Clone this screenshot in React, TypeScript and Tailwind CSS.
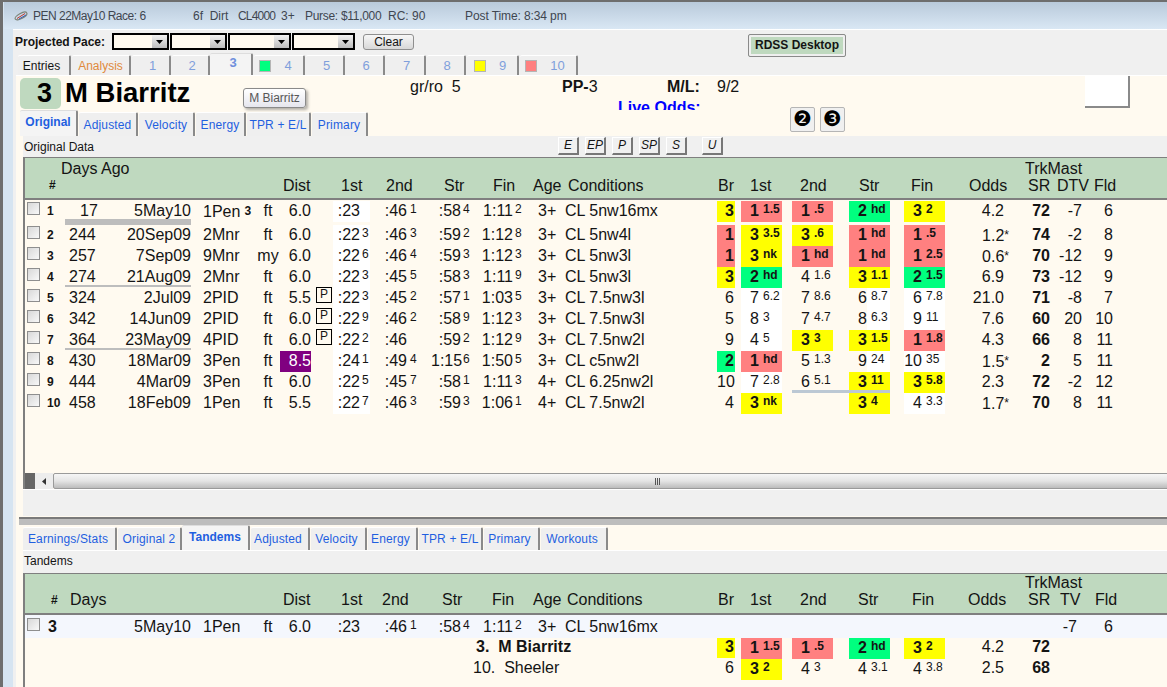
import React from 'react';

const GRID =
  'grid grid-cols-[19px_21px_35px_91px_65px_24px_31px_22px_37px_61px_46px_53px_30px_157px_18px_6px_41px_10px_41px_16px_41px_14px_41px_59px_46px_32px_31px]';

type Run = {
  n: number;
  days: string;
  date: string;
  trk: string;
  trkSup?: string;
  surf: string;
  dist: string;
  p?: boolean;
  t1: string;
  t2: string;
  t3: string;
  t4: string;
  age: string;
  cond: string;
  br: string;
  c1: string;
  c2: string;
  c3: string;
  c4: string;
  odds: string;
  sr: string;
  dtv: string;
  fld: string;
};

// cells are written "main|sup" and calls "pos|margin|colour"
const runs: Run[] = [
  { n: 1, days: '17', date: '5May10', trk: '1Pen', trkSup: '3', surf: 'ft', dist: '6.0', t1: ':23|', t2: ':46|1', t3: ':58|4', t4: '1:11|2', age: '3+', cond: 'CL 5nw16mx', br: '3|y', c1: '1|1.5|r', c2: '1|.5|r', c3: '2|hd|g', c4: '3|2|y', odds: '4.2', sr: '72', dtv: '-7', fld: '6' },
  { n: 2, days: '244', date: '20Sep09', trk: '2Mnr', surf: 'ft', dist: '6.0', t1: ':22|3', t2: ':46|3', t3: ':59|2', t4: '1:12|8', age: '3+', cond: 'CL 5nw4l', br: '1|r', c1: '3|3.5|y', c2: '3|.6|y', c3: '1|hd|r', c4: '1|.5|r', odds: '1.2*', sr: '74', dtv: '-2', fld: '8' },
  { n: 3, days: '257', date: '7Sep09', trk: '9Mnr', surf: 'my', dist: '6.0', t1: ':22|6', t2: ':46|4', t3: ':59|3', t4: '1:12|3', age: '3+', cond: 'CL 5nw3l', br: '1|r', c1: '3|nk|y', c2: '1|hd|r', c3: '1|hd|r', c4: '1|2.5|r', odds: '0.6*', sr: '70', dtv: '-12', fld: '9' },
  { n: 4, days: '274', date: '21Aug09', trk: '2Mnr', surf: 'ft', dist: '6.0', t1: ':22|3', t2: ':45|5', t3: ':58|3', t4: '1:11|9', age: '3+', cond: 'CL 5nw3l', br: '3|y', c1: '2|hd|g', c2: '4|1.6|', c3: '3|1.1|y', c4: '2|1.5|g', odds: '6.9', sr: '73', dtv: '-12', fld: '9' },
  { n: 5, days: '324', date: '2Jul09', trk: '2PID', surf: 'ft', dist: '5.5', p: true, t1: ':22|3', t2: ':45|2', t3: ':57|1', t4: '1:03|5', age: '3+', cond: 'CL 7.5nw3l', br: '6|', c1: '7|6.2|', c2: '7|8.6|', c3: '6|8.7|', c4: '6|7.8|', odds: '21.0', sr: '71', dtv: '-8', fld: '7' },
  { n: 6, days: '342', date: '14Jun09', trk: '2PID', surf: 'ft', dist: '6.0', p: true, t1: ':22|9', t2: ':46|2', t3: ':58|9', t4: '1:12|3', age: '3+', cond: 'CL 7.5nw3l', br: '5|', c1: '8|3|', c2: '7|4.7|', c3: '8|6.3|', c4: '9|11|', odds: '7.6', sr: '60', dtv: '20', fld: '10' },
  { n: 7, days: '364', date: '23May09', trk: '4PID', surf: 'ft', dist: '6.0', p: true, t1: ':22|2', t2: ':46|', t3: ':59|2', t4: '1:12|9', age: '3+', cond: 'CL 7.5nw2l', br: '9|', c1: '4|5|', c2: '3|3|y', c3: '3|1.5|y', c4: '1|1.8|r', odds: '4.3', sr: '66', dtv: '8', fld: '11' },
  { n: 8, days: '430', date: '18Mar09', trk: '3Pen', surf: 'ft', dist: '8.5', t1: ':24|1', t2: ':49|4', t3: '1:15|6', t4: '1:50|5', age: '3+', cond: 'CL c5nw2l', br: '2|g', c1: '1|hd|r', c2: '5|1.3|', c3: '9|24|', c4: '10|35|', odds: '1.5*', sr: '2', dtv: '5', fld: '11' },
  { n: 9, days: '444', date: '4Mar09', trk: '3Pen', surf: 'ft', dist: '6.0', t1: ':22|5', t2: ':45|7', t3: ':58|1', t4: '1:11|3', age: '4+', cond: 'CL 6.25nw2l', br: '10|', c1: '7|2.8|', c2: '6|5.1|', c3: '3|11|y', c4: '3|5.8|y', odds: '2.3', sr: '72', dtv: '-2', fld: '12' },
  { n: 10, days: '458', date: '18Feb09', trk: '1Pen', surf: 'ft', dist: '5.5', t1: ':22|7', t2: ':46|3', t3: ':59|3', t4: '1:06|1', age: '4+', cond: 'CL 7.5nw2l', br: '4|', c1: '3|nk|y', c2: '', c3: '3|4|y', c4: '4|3.3|', odds: '1.7*', sr: '70', dtv: '8', fld: '11' },
];

const fill: Record<string, string> = { y: 'bg-[#ffff00]', r: 'bg-[#ff8080]', g: 'bg-[#00ff7f]' };

function Checkbox() {
  return (
    <div className="ml-[2px] mt-[1px] w-[13px] h-[13px] border border-[#8e8e8e] bg-gradient-to-br from-[#d8d8d8] to-[#f8f8f8]" />
  );
}

function Time({ value, w, gap = 'ml-[2px]', className = '' }: { value: string; w: string; gap?: string; className?: string }) {
  const [main, sup] = value.split('|');
  return (
    <div className={`flex h-[21px] leading-[20px] ${className}`}>
      <span className={`${w} text-right whitespace-nowrap`}>{main}</span>
      <span className={`${gap} text-[12px] leading-[17px]`}>{sup}</span>
    </div>
  );
}

function Call({ value, whiteSup, whiteAll, line }: { value: string; whiteSup?: boolean; whiteAll?: boolean; line?: boolean }) {
  const [pos, margin, colour] = value.split('|');
  const border = line ? 'border-b-[3px] border-[#bcc8d4]' : '';
  if (colour) {
    return (
      <div className={`flex h-[21px] leading-[20px] font-bold ${fill[colour]} ${border}`}>
        <span className="w-[18px] text-right">{pos}</span>
        <span className="ml-[4px] text-[12px] leading-[17px]">{margin}</span>
      </div>
    );
  }
  return (
    <div className={`flex h-[21px] leading-[20px] ${whiteAll ? 'bg-white' : ''} ${border}`}>
      <span className="w-[18px] text-right">{pos}</span>
      <span className={`pl-[4px] flex-1 text-[12px] leading-[17px] ${whiteSup ? 'bg-white' : ''}`}>{margin}</span>
    </div>
  );
}

function Odds({ value }: { value: string }) {
  const star = value.endsWith('*');
  return (
    <div className="text-right">
      {value.replace('*', '')}
      {star && <span className="mr-[-5px] text-[12px] align-[2px]">*</span>}
    </div>
  );
}

function RunRow({ r }: { r: Run }) {
  const [brVal, brCol] = r.br.split('|');
  const ruled = r.n === 4 || r.n === 7;
  const under = r.n === 1 ? 'h-[24px] border-b-[6px] border-[#bdbdbd]' : ruled ? 'h-[20px] border-b-2 border-[#bdbdbd]' : '';
  return (
    <div className={`${GRID} ${r.n === 1 ? 'h-[24px]' : 'h-[21px]'} text-[16px] leading-[20px]`}>
      <Checkbox />
      <div className="pl-[3px] text-[12px] font-bold">{r.n}</div>
      <div className={`${r.n === 1 ? 'pl-[15px]' : 'pl-[4px]'} ${under}`}>{r.days}</div>
      <div className={`text-right ${under}`}>{r.date}</div>
      <div className="pl-[12px] whitespace-nowrap">
        {r.trk}
        {r.trkSup && <span className="ml-[4px] text-[12px] font-bold align-[2px]">{r.trkSup}</span>}
      </div>
      <div className="text-center">{r.surf}</div>
      <div className={`text-right h-[21px] ${r.dist === '8.5' ? 'bg-[#800080] text-white' : ''}`}>{r.dist}</div>
      <div>
        {r.p && (
          <div className="ml-[5px] -mt-[1px] w-[16px] h-[16px] border border-black text-[12px] leading-[13px] text-center">P</div>
        )}
      </div>
      <Time value={r.t1} w="w-[27px]" className="bg-white" />
      <Time value={r.t2} w="w-[37px]" gap="ml-[3px]" />
      <Time value={r.t3} w="w-[30px]" />
      <Time value={r.t4} w="w-[36px]" />
      <div className="pl-[8px]">{r.age}</div>
      <div className="pl-[5px] whitespace-nowrap">{r.cond}</div>
      <div className={`text-right pr-[1px] h-[21px] ${brCol ? `font-bold ${fill[brCol]}` : ''}`}>{brVal}</div>
      <div />
      <Call value={r.c1} whiteAll />
      <div />
      {r.c2 ? <Call value={r.c2} line={r.n === 9} /> : <div />}
      <div className={r.n === 9 ? 'h-[21px] border-b-[3px] border-[#bcc8d4]' : ''} />
      <Call value={r.c3} whiteSup line={r.n === 9} />
      <div />
      <Call value={r.c4} whiteAll />
      <Odds value={r.odds} />
      <div className="text-right font-bold">{r.sr}</div>
      <div className="text-right">{r.dtv}</div>
      <div className="text-right">{r.fld}</div>
    </div>
  );
}

function Tab({ w, active, children, className = '' }: { w: string; active?: boolean; children: React.ReactNode; className?: string }) {
  return (
    <div
      className={`${w} flex items-center justify-center shrink-0 border-r-2 border-[#8a8a8a] rounded-t-[2px] whitespace-nowrap ${
        active ? 'h-full pb-[3px] bg-[#f4f4f4] font-bold border-t border-t-[#ddd]' : 'h-[calc(100%-2px)] bg-[#efefef] border-t border-t-white ml-[1px]'
      } ${className}`}
    >
      {children}
    </div>
  );
}

function Swatch({ colour }: { colour: string }) {
  return <span className={`w-[12px] h-[12px] border border-[#b5b5b5] shrink-0 ${colour}`} />;
}

function Combo({ w }: { w: string }) {
  return (
    <div className={`${w} h-[17px] border-2 border-black bg-[#fffaf0] flex justify-end`}>
      <div className="w-[15px] h-full bg-gradient-to-b from-[#f2f2f2] to-[#bdbdbd] flex items-center justify-center">
        <svg width="7" height="4" viewBox="0 0 7 4">
          <path d="M0 0h7L3.5 4z" fill="#000" />
        </svg>
      </div>
    </div>
  );
}

function ToolBtn({ label, className = '' }: { label: string; className?: string }) {
  return (
    <div className={`w-[21px] h-[18px] border-t border-l border-t-white border-l-white border-r-2 border-b-2 border-r-[#777] border-b-[#777] bg-[#f0f0f0] text-[12px] italic leading-[15px] text-center ${className}`}>
      {label}
    </div>
  );
}

function HeadCell({ w, children, bold }: { w: string; children?: React.ReactNode; bold?: boolean }) {
  return <span className={`${w} shrink-0 ${bold ? 'text-[12px] font-bold' : ''}`}>{children}</span>;
}

function NumBtn({ glyph, className = '' }: { glyph: string; className?: string }) {
  return (
    <div className={`w-[25px] h-[25px] -mt-[3px] border border-[#b5b5b5] rounded-[2px] bg-[#f0f0f0] flex items-center justify-center font-['DejaVu_Sans',sans-serif] text-[21px] leading-none ${className}`}>
      {glyph}
    </div>
  );
}

export default function App() {
  return (
    <div className="w-[1167px] h-[687px] overflow-hidden flex flex-col bg-[#d6e4f1] border-t-2 border-l-[3px] border-[#6e6e6e] font-['Liberation_Sans',Arial,sans-serif] text-[#141414]">
      {/* title */}
      <div className="h-[27px] shrink-0 ml-[1px] bg-gradient-to-b from-[#b9cadb] to-[#d9e7f4] flex items-center pl-[10px] text-[12px] text-[#3f4650] whitespace-nowrap">
        <svg width="14" height="12" viewBox="0 0 14 12" className="shrink-0">
          <ellipse cx="7" cy="6" rx="6.5" ry="2.6" transform="rotate(-28 7 6)" fill="none" stroke="#7c8478" strokeWidth="1.2" />
          <path d="M3 8.5 11 3.5" stroke="#c0392b" strokeWidth="1" />
          <path d="M5 9 12 5" stroke="#3a5fb0" strokeWidth="1" />
        </svg>
        <span className="ml-[5px] w-[160px] tracking-[-0.5px]">PEN 22May10 Race: 6</span>
        <span className="w-[45px]">6f&nbsp;&nbsp;Dirt</span>
        <span className="w-[43px] tracking-[-0.8px]">CL4000</span>
        <span className="w-[24px]">3+</span>
        <span className="w-[83px] tracking-[-0.3px]">Purse: $11,000</span>
        <span className="w-[77px]">RC: 90</span>
        <span className="tracking-[-0.1px]">Post Time: 8:34 pm</span>
      </div>

      <div className="flex-1 ml-[10px] border-t border-white bg-[#f0f0f0] flex flex-col min-h-0">
        {/* projected pace */}
        <div className="h-[23px] shrink-0 flex items-start pl-[2px] pt-[3px]">
          <span className="w-[97px] text-[12px] font-bold leading-[18px]">Projected Pace:</span>
          <Combo w="w-[57px]" />
          <Combo w="w-[57px] ml-[1px]" />
          <Combo w="w-[63px] ml-[1px]" />
          <Combo w="w-[63px] ml-[1px]" />
          <div className="ml-[8px] mt-[1px] w-[51px] h-[16px] rounded-[3px] border border-[#8f8f8f] bg-gradient-to-b from-[#f7f7f7] to-[#d8d8d8] text-[12px] leading-[14px] text-center">Clear</div>
          <div className="ml-[334px] mt-[1px] w-[98px] h-[23px] rounded-[2px] border border-[#8a8a8a] bg-[#bfd9bf] shadow-[inset_0_0_0_2px_#efefef] text-[12px] font-bold leading-[21px] text-center">RDSS Desktop</div>
        </div>

        {/* race entries */}
        <div className="h-[22px] shrink-0 flex items-end pl-[4px] text-[12px]">
          <Tab w="w-[53px]" className="pr-[4px]">Entries</Tab>
          <Tab w="w-[59px]" className="text-[#e08a3c]">Analysis</Tab>
          <Tab w="w-[39px]" className="text-[13px] text-[#7f9fdc] pl-[4px]">1</Tab>
          <Tab w="w-[38px]" className="text-[13px] text-[#7f9fdc] pl-[4px]">2</Tab>
          <Tab w="w-[43px]" active className="text-[13px] text-[#6f8fdc] pl-[5px]">3</Tab>
          <Tab w="w-[51px]" className="text-[13px] text-[#7f9fdc] gap-[13px] pr-[6px]"><Swatch colour="bg-[#00ff7f]" />4</Tab>
          <Tab w="w-[39px]" className="text-[13px] text-[#7f9fdc] pl-[4px]">5</Tab>
          <Tab w="w-[39px]" className="text-[13px] text-[#7f9fdc] pl-[3px]">6</Tab>
          <Tab w="w-[40px]" className="text-[13px] text-[#7f9fdc] pl-[3px]">7</Tab>
          <Tab w="w-[39px]" className="text-[13px] text-[#7f9fdc] pl-[3px]">8</Tab>
          <Tab w="w-[52px]" className="text-[13px] text-[#7f9fdc] gap-[13px] pr-[4px]"><Swatch colour="bg-[#ffff00]" />9</Tab>
          <Tab w="w-[58px]" className="text-[13px] text-[#7f9fdc] gap-[13px] pr-[6px]"><Swatch colour="bg-[#ff8080]" />10</Tab>
        </div>

        {/* horse header */}
        <div className="relative h-[61px] shrink-0 ml-[3px] bg-[#fffaf0] border-t border-white">
          <div className="h-[34px] overflow-hidden flex items-start">
            <div className="ml-[4px] mt-[2px] w-[41px] h-[31px] rounded-[5px] bg-[#bfd9bf] text-[27px] font-bold leading-[31px] text-right pr-[9px] text-black">3</div>
            <div className="ml-[4px] w-[345px] text-[27.5px] font-bold leading-[33px] text-black">M Biarritz</div>
            <div className="w-[152px] mt-[1px] text-[16px] leading-[20px]">gr/ro&nbsp;&nbsp;5</div>
            <div className="w-[523px] mt-[1px] text-[16px] leading-[20px]">
              <div className="flex">
                <span className="w-[105px]"><b>PP-</b>3</span>
                <span className="w-[50px] font-bold">M/L:</span>
                <span>9/2</span>
              </div>
              <div className="pl-[56px] mt-[1px] font-bold text-[#0000ff]">Live Odds:</div>
            </div>
            <div className="w-[45px] h-[32px] bg-white border-r-2 border-b-2 border-[#8a8a8a]" />
          </div>
          <div className="h-[26px] flex items-end pl-[4px] text-[12px] text-[#1f5fe0]">
            <Tab w="w-[58px]" active>Original</Tab>
            <Tab w="w-[59px]" className="tracking-[0.15px]">Adjusted</Tab>
            <Tab w="w-[56px]" className="tracking-[0.15px]">Velocity</Tab>
            <Tab w="w-[50px]" className="tracking-[0.15px]">Energy</Tab>
            <Tab w="w-[64px]" className="tracking-[0.15px]">TPR + E/L</Tab>
            <Tab w="w-[56px]" className="tracking-[0.15px]">Primary</Tab>
            <NumBtn glyph="❷" className="ml-[422px] self-start text-black" />
            <NumBtn glyph="❸" className="ml-[5px] self-start text-black" />
          </div>
          {/* tooltip */}
          <div className="absolute left-[227px] top-[12px] w-[63px] h-[20px] rounded-[3px] border border-[#8a8a8a] bg-gradient-to-b from-white to-[#e6e6ee] shadow-[2px_2px_3px_rgba(0,0,0,0.3)] text-[12px] leading-[18px] text-center text-[#575757]">M Biarritz</div>
        </div>

        {/* original data */}
        <div className="flex-1 ml-[3px] bg-[#fffaf0] flex flex-col min-h-0">
          <div className="ml-[7px] h-[21px] shrink-0 bg-[#f0f0f0] flex items-start pt-[1px] text-[12px]">
            <span className="w-[535px] pl-[1px] leading-[20px]">Original Data</span>
            <ToolBtn label="E" />
            <ToolBtn label="EP" className="ml-[6px]" />
            <ToolBtn label="P" className="ml-[6px]" />
            <ToolBtn label="SP" className="ml-[6px]" />
            <ToolBtn label="S" className="ml-[6px]" />
            <ToolBtn label="U" className="ml-[15px]" />
          </div>
          <div className="ml-[7px] border-l-2 border-[#7f7f7f]">
            <div className="h-[43px] border-t border-b-2 border-[#7f7f7f] bg-[#bfd9bf] text-[16px]">
              <div className="h-[19px] leading-[20px] flex pl-[36px] pt-[1px]">
                <span className="w-[964px]">Days Ago</span>
                <span>TrkMast</span>
              </div>
              <div className="h-[17px] leading-[17px] flex items-center pl-[24px] whitespace-nowrap">
                <HeadCell w="w-[234px]" bold>#</HeadCell>
                <HeadCell w="w-[58px]">Dist</HeadCell>
                <HeadCell w="w-[45px]">1st</HeadCell>
                <HeadCell w="w-[58px]">2nd</HeadCell>
                <HeadCell w="w-[49px]">Str</HeadCell>
                <HeadCell w="w-[40px]">Fin</HeadCell>
                <HeadCell w="w-[35px]">Age</HeadCell>
                <HeadCell w="w-[150px]">Conditions</HeadCell>
                <HeadCell w="w-[32px]">Br</HeadCell>
                <HeadCell w="w-[50px]">1st</HeadCell>
                <HeadCell w="w-[59px]">2nd</HeadCell>
                <HeadCell w="w-[52px]">Str</HeadCell>
                <HeadCell w="w-[58px]">Fin</HeadCell>
                <HeadCell w="w-[59px]">Odds</HeadCell>
                <HeadCell w="w-[29px]">SR</HeadCell>
                <HeadCell w="w-[37px]">DTV</HeadCell>
                <HeadCell w="w-[30px]">Fld</HeadCell>
              </div>
            </div>
            <div className="h-[273px] pt-[1px]">
              {runs.map((r) => (
                <RunRow key={r.n} r={r} />
              ))}
            </div>
            {/* scrollbar */}
            <div className="h-[16px] flex overflow-hidden">
              <div className="w-[10px] shrink-0 bg-[#666]" />
              <div className="w-[18px] shrink-0 bg-[#ededed] flex items-center justify-center">
                <svg width="4" height="7" viewBox="0 0 4 7"><path d="M4 0v7L0 3.5z" fill="#333" /></svg>
              </div>
              <div className="w-[1208px] shrink-0 rounded-[2px] border border-[#9a9a9a] bg-gradient-to-b from-[#f6f6f6] via-[#e4e4e4] to-[#bcbcbc] flex items-center justify-center">
                <div className="flex gap-[1px]">
                  <span className="w-[1px] h-[7px] bg-[#555]" />
                  <span className="w-[1px] h-[7px] bg-[#555]" />
                  <span className="w-[1px] h-[7px] bg-[#555]" />
                </div>
              </div>
            </div>
          </div>
          <div className="ml-[7px] h-[27px] shrink-0 bg-[#f0f0f0] border-t border-white" />

          {/* splitter */}
          <div className="ml-[3px] mt-[1px] h-[8px] shrink-0 bg-[#bdbdbd] border-t-2 border-[#7a7a7a]" />

          {/* tandems */}
          <div className="ml-[3px] h-[25px] shrink-0 flex items-end pl-[3px] text-[12px] text-[#1f5fe0]">
            <Tab w="w-[94px]" className="tracking-[0.15px] pr-[2px]">Earnings/Stats</Tab>
            <Tab w="w-[64px]" className="tracking-[0.15px]">Original 2</Tab>
            <Tab w="w-[68px]" active>Tandems</Tab>
            <Tab w="w-[59px]" className="tracking-[0.15px] pr-[3px]">Adjusted</Tab>
            <Tab w="w-[56px]" className="tracking-[0.15px] pr-[3px]">Velocity</Tab>
            <Tab w="w-[50px]" className="tracking-[0.15px] pr-[3px]">Energy</Tab>
            <Tab w="w-[64px]" className="tracking-[0.15px]">TPR + E/L</Tab>
            <Tab w="w-[56px]" className="tracking-[0.15px] pr-[3px]">Primary</Tab>
            <Tab w="w-[67px]" className="tracking-[0.15px] pr-[3px]">Workouts</Tab>
          </div>
          <div className="ml-[7px] h-[23px] shrink-0 bg-[#f0f0f0] border-t border-white text-[12px] leading-[20px] pl-[1px]">Tandems</div>
          <div className="ml-[7px] border-l-2 border-[#7f7f7f] flex-1">
            <div className="h-[42px] border-t border-b-2 border-[#7f7f7f] bg-[#bfd9bf] text-[16px]">
              <div className="h-[17px] leading-[18px] pl-[1000px]">TrkMast</div>
              <div className="h-[18px] leading-[18px] flex items-center pl-[26px] whitespace-nowrap">
                <HeadCell w="w-[19px]" bold>#</HeadCell>
                <HeadCell w="w-[213px]">Days</HeadCell>
                <HeadCell w="w-[58px]">Dist</HeadCell>
                <HeadCell w="w-[41px]">1st</HeadCell>
                <HeadCell w="w-[60px]">2nd</HeadCell>
                <HeadCell w="w-[50px]">Str</HeadCell>
                <HeadCell w="w-[41px]">Fin</HeadCell>
                <HeadCell w="w-[34px]">Age</HeadCell>
                <HeadCell w="w-[151px]">Conditions</HeadCell>
                <HeadCell w="w-[32px]">Br</HeadCell>
                <HeadCell w="w-[50px]">1st</HeadCell>
                <HeadCell w="w-[58px]">2nd</HeadCell>
                <HeadCell w="w-[54px]">Str</HeadCell>
                <HeadCell w="w-[56px]">Fin</HeadCell>
                <HeadCell w="w-[60px]">Odds</HeadCell>
                <HeadCell w="w-[32px]">SR</HeadCell>
                <HeadCell w="w-[35px]">TV</HeadCell>
                <HeadCell w="w-[30px]">Fld</HeadCell>
              </div>
            </div>
            <div className={`${GRID} h-[23px] pt-[2px] bg-[#f4f7fd] text-[16px] leading-[20px]`}>
              <Checkbox />
              <div className="pl-[4px] font-bold">3</div>
              <div />
              <div className="text-right">5May10</div>
              <div className="pl-[12px]">1Pen</div>
              <div className="text-center">ft</div>
              <div className="text-right">6.0</div>
              <div />
              <Time value=":23|" w="w-[27px]" />
              <Time value=":46|1" w="w-[37px]" gap="ml-[3px]" />
              <Time value=":58|4" w="w-[30px]" />
              <Time value="1:11|2" w="w-[36px]" />
              <div className="pl-[8px]">3+</div>
              <div className="pl-[5px]">CL 5nw16mx</div>
              <div className="col-span-11" />
              <div className="text-right pr-[5px]">-7</div>
              <div className="text-right">6</div>
            </div>
            <div className={`${GRID} h-[21px] text-[16px] leading-[18px]`}>
              <div className="col-span-14 pl-[451px] font-bold whitespace-nowrap">3.&nbsp;&nbsp;M Biarritz</div>
              <div className="text-right pr-[1px] h-[20px] font-bold bg-[#ffff00]">3</div>
              <div />
              <Call value="1|1.5|r" />
              <div />
              <Call value="1|.5|r" />
              <div />
              <Call value="2|hd|g" />
              <div />
              <Call value="3|2|y" />
              <Odds value="4.2" />
              <div className="text-right font-bold">72</div>
            </div>
            <div className={`${GRID} h-[21px] text-[16px] leading-[18px]`}>
              <div className="col-span-14 pl-[448px] whitespace-nowrap">10.&nbsp;&nbsp;Sheeler</div>
              <div className="text-right pr-[1px]">6</div>
              <div />
              <Call value="3|2|y" />
              <div />
              <Call value="4|3|" />
              <div />
              <Call value="4|3.1|" />
              <div />
              <Call value="4|3.8|" />
              <Odds value="2.5" />
              <div className="text-right font-bold">68</div>
            </div>
          </div>
        </div>
      </div>
    </div>
  );
}
